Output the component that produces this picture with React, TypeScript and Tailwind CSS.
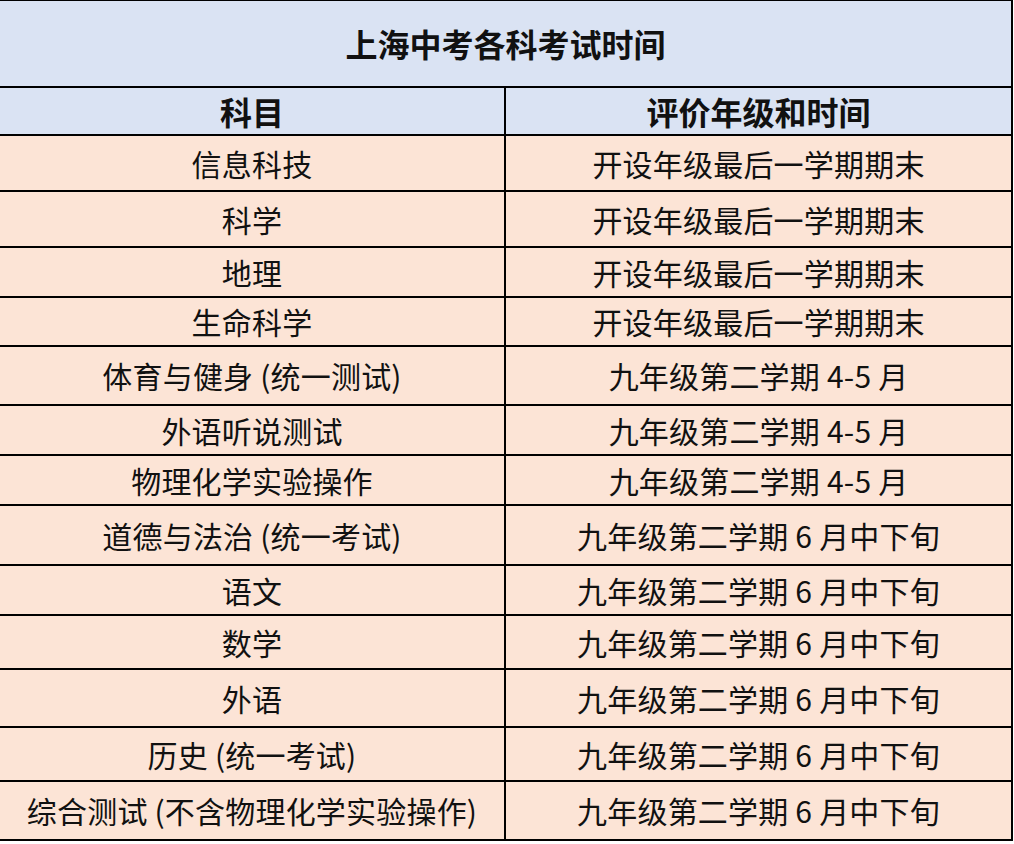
import React from "react";

const rows: { a: string; b: string; h: string }[] = [
  { a: "信息科技", b: "开设年级最后一学期期末", h: "h-[56px]" },
  { a: "科学", b: "开设年级最后一学期期末", h: "h-[56px]" },
  { a: "地理", b: "开设年级最后一学期期末", h: "h-[50px]" },
  { a: "生命科学", b: "开设年级最后一学期期末", h: "h-[49px]" },
  { a: "体育与健身 (统一测试)", b: "九年级第二学期 4-5 月", h: "h-[59px]" },
  { a: "外语听说测试", b: "九年级第二学期 4-5 月", h: "h-[50px]" },
  { a: "物理化学实验操作", b: "九年级第二学期 4-5 月", h: "h-[50px]" },
  { a: "道德与法治 (统一考试)", b: "九年级第二学期 6 月中下旬", h: "h-[60px]" },
  { a: "语文", b: "九年级第二学期 6 月中下旬", h: "h-[50px]" },
  { a: "数学", b: "九年级第二学期 6 月中下旬", h: "h-[54px]" },
  { a: "外语", b: "九年级第二学期 6 月中下旬", h: "h-[58px]" },
  { a: "历史 (统一考试)", b: "九年级第二学期 6 月中下旬", h: "h-[54px]" },
  { a: "综合测试 (不含物理化学实验操作)", b: "九年级第二学期 6 月中下旬", h: "h-[59px]" },
];

export default function App() {
  return (
    <div
      className="w-[1014px] h-[844px] bg-white text-[#111111]"
      style={{ fontFamily: '"Noto Sans CJK SC", "Noto Sans", sans-serif' }}
    >
      <div className="w-[1013px] border-r-2 border-black">
        <div className="h-[88px] border-t border-b-2 border-black bg-[#dae3f3] flex items-center justify-center text-[32px] font-bold pb-[2px]">
          上海中考各科考试时间
        </div>
        <div className="h-[48px] border-b-2 border-black bg-[#dae3f3] flex text-[32px] font-bold">
          <div className="w-[506px] border-r-2 border-black flex items-center justify-center">科目</div>
          <div className="flex-1 flex items-center justify-center">评价年级和时间</div>
        </div>
        {rows.map((r, i) => (
          <div key={i} className={`${r.h} border-b-2 border-black bg-[#fce4d6] flex text-[30px] tracking-[0.2px]`}>
            <div className="w-[506px] border-r-2 border-black flex items-center justify-center whitespace-pre">{r.a}</div>
            <div className="flex-1 flex items-center justify-center whitespace-pre">{r.b}</div>
          </div>
        ))}
      </div>
    </div>
  );
}
